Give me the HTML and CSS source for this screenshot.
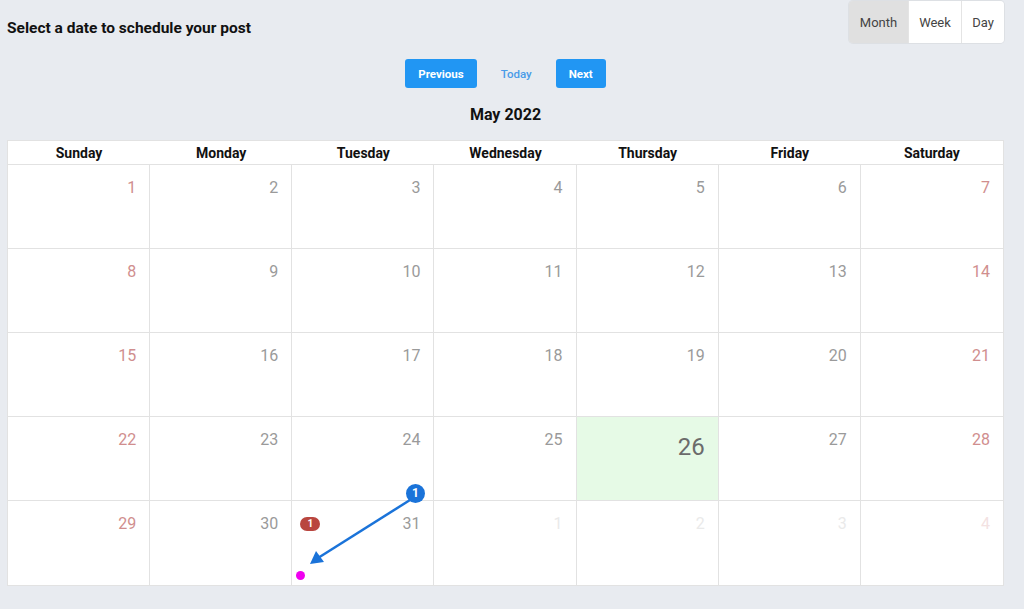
FILE: index.html
```html
<!DOCTYPE html>
<html lang="en">
<head>
    <meta charset="UTF-8">
    <title>Schedule post</title>
    <link rel="stylesheet" href="styles.css">
</head>
<body>
<div id="page">
    <div class="topbar">
        <h3 class="title">Select a date to schedule your post</h3>
        <div class="views">
            <button class="view active">Month</button>
            <button class="view">Week</button>
            <button class="view">Day</button>
        </div>
    </div>
    <div class="nav">
        <button class="btn">Previous</button>
        <button class="today">Today</button>
        <button class="btn">Next</button>
    </div>
    <div class="month">May 2022</div>
    <div class="calendar">
        <div class="head">Sunday</div>
        <div class="head">Monday</div>
        <div class="head">Tuesday</div>
        <div class="head">Wednesday</div>
        <div class="head">Thursday</div>
        <div class="head">Friday</div>
        <div class="head">Saturday</div>

        <div class="day weekend">1</div>
        <div class="day">2</div>
        <div class="day">3</div>
        <div class="day">4</div>
        <div class="day">5</div>
        <div class="day">6</div>
        <div class="day weekend">7</div>

        <div class="day weekend">8</div>
        <div class="day">9</div>
        <div class="day">10</div>
        <div class="day">11</div>
        <div class="day">12</div>
        <div class="day">13</div>
        <div class="day weekend">14</div>

        <div class="day weekend">15</div>
        <div class="day">16</div>
        <div class="day">17</div>
        <div class="day">18</div>
        <div class="day">19</div>
        <div class="day">20</div>
        <div class="day weekend">21</div>

        <div class="day weekend">22</div>
        <div class="day">23</div>
        <div class="day">24</div>
        <div class="day">25</div>
        <div class="day current">26</div>
        <div class="day">27</div>
        <div class="day weekend">28</div>

        <div class="day weekend">29</div>
        <div class="day">30</div>
        <div class="day marked"><span class="badge">1</span>31</div>
        <div class="day other">1</div>
        <div class="day other">2</div>
        <div class="day other">3</div>
        <div class="day other weekend">4</div>
    </div>

    <!-- annotation -->
    <div class="pin">1</div>
    <svg class="arrow" width="140" height="100" viewBox="0 0 140 100">
        <line x1="110" y1="10" x2="18" y2="68" stroke="#1a73d9" stroke-width="2.5"/>
        <polygon points="10,74 16,61 24,72" fill="#1a73d9"/>
    </svg>
    <div class="dot"></div>
</div>
</body>
</html>
```
FILE: styles.css
```css
body {
    margin: 0;
    background-color: #e8ebf0;
    font-family: Roboto, "Liberation Sans", sans-serif;
}
#page {
    position: relative;
    width: 997px;
    height: 609px;
    padding-left: 7px;
}
.topbar {
    display: flex;
    justify-content: space-between;
    align-items: flex-start;
    padding-top: 1px;
}
.title {
    margin: 18px 0 0 0;
    font-size: 15.5px;
    font-weight: bold;
    color: #111;
}
.views {
    display: flex;
    border-radius: 4px;
    overflow: hidden;
    box-shadow: 0 0 0 1px #dde0e4;
}
.view {
    font-family: inherit;
    font-size: 13px;
    color: #444;
    background-color: #fff;
    border: none;
    border-left: 1px solid #e4e4e4;
    height: 42px;
    padding: 0;
    width: 53px;
}
.view:first-child {
    border-left: none;
    width: 59px;
}
.view:last-child {
    width: 43px;
}
.view.active {
    background-color: #e0e0e0;
}
.nav {
    display: flex;
    justify-content: center;
    align-items: center;
    gap: 23px;
    margin-top: 16px;
}
.btn {
    font-family: inherit;
    font-size: 11.5px;
    font-weight: bold;
    color: #fff;
    background-color: #2196f3;
    border: none;
    border-radius: 3px;
    height: 29px;
    padding: 0 13px;
}
.today {
    font-family: inherit;
    font-size: 11.5px;
    font-weight: 500;
    color: #4a9be8;
    background: none;
    border: none;
    padding: 0 1px;
}
.month {
    text-align: center;
    font-size: 16px;
    font-weight: bold;
    color: #111;
    margin-top: 17px;
}
.calendar {
    display: grid;
    grid-template-columns: repeat(7, 1fr);
    grid-template-rows: 24px repeat(5, 84px);
    width: 997px;
    margin-top: 16px;
    background-color: #fff;
    border: 1px solid #e2e2e2;
    box-sizing: border-box;
}
.head {
    text-align: center;
    font-size: 14px;
    font-weight: bold;
    color: #111;
    line-height: 24px;
    border-bottom: 1px solid #e2e2e2;
}
.day {
    border-right: 1px solid #e2e2e2;
    border-bottom: 1px solid #e2e2e2;
    text-align: right;
    padding: 13px 13px 0 0;
    font-size: 16px;
    color: #9a9a9a;
    display: flex;
    justify-content: flex-end;
    align-items: flex-start;
}
.day:nth-child(7n) {
    border-right: none;
}
.day:nth-last-child(-n+7) {
    border-bottom: none;
}
.day.weekend {
    color: #d08e8e;
}
.day.other {
    color: #eaeaea;
}
.day.other.weekend {
    color: #f3e2e2;
}
.day.current {
    background-color: #e6fae6;
    font-size: 24px;
    color: #6b6b6b;
    padding-top: 16px;
}
.day.marked {
    justify-content: space-between;
    padding-left: 8px;
}
.badge {
    background-color: #b9463f;
    color: #fff;
    font-size: 10px;
    font-weight: bold;
    border-radius: 7px;
    width: 20px;
    height: 14px;
    line-height: 14px;
    text-align: center;
    margin-top: 3px;
}
.pin {
    position: absolute;
    left: 406px;
    top: 484px;
    width: 19px;
    height: 19px;
    border-radius: 50%;
    background-color: #1a73d9;
    color: #fff;
    font-size: 12px;
    font-weight: bold;
    text-align: center;
    line-height: 19px;
}
.arrow {
    position: absolute;
    left: 300px;
    top: 490px;
}
.dot {
    position: absolute;
    left: 296px;
    top: 571px;
    width: 9px;
    height: 9px;
    border-radius: 50%;
    background-color: #f000f0;
}
```
